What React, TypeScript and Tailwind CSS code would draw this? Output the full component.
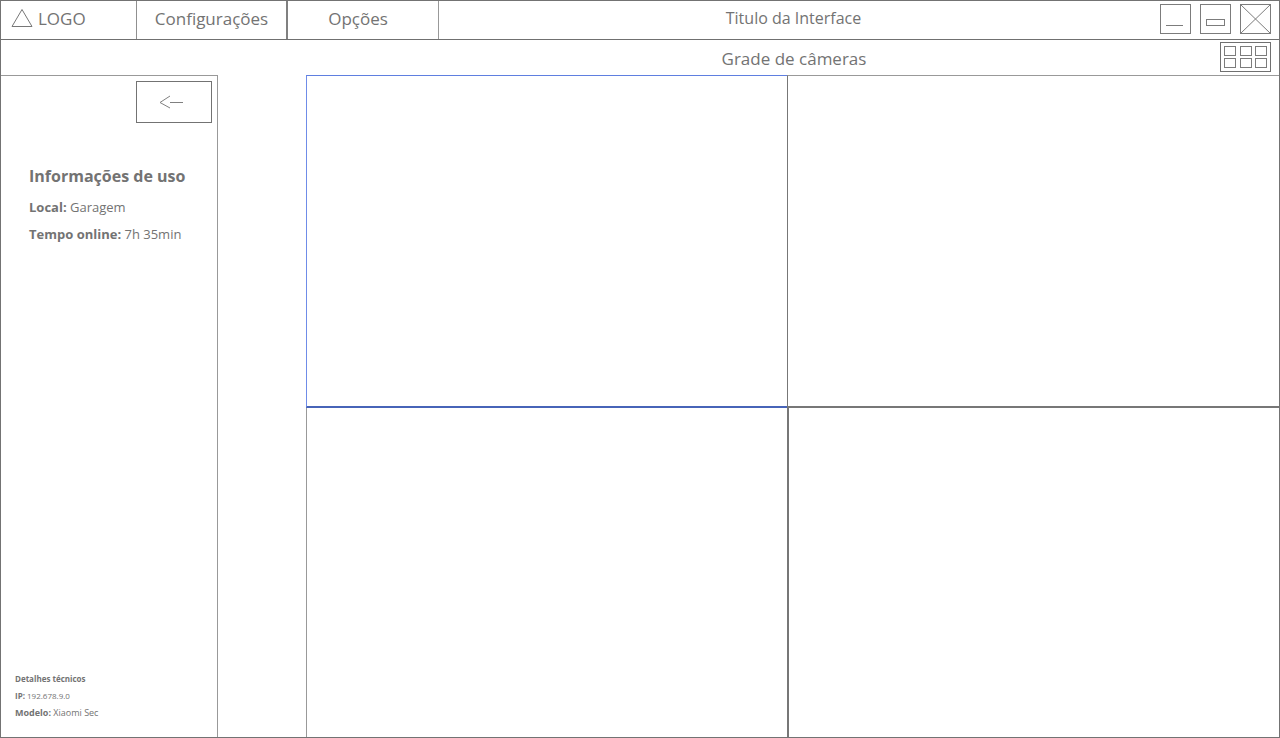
import type { ReactNode } from "react";

const cameras = ["Câmera 1", "Câmera 2", "Câmera 3", "Câmera 4"];

const cameraBorders = [
  "border-t border-l border-b-2 border-t-[#5f7fe0] border-l-[#6f8ce8] border-b-[#4764b8]",
  "border-t border-l border-b-2 border-t-[#999999] border-l-[#777777] border-b-[#777777]",
  "border-l border-l-[#999999]",
  "border-l-2 border-l-[#777777]",
];

function WindowButton({ label, children }: { label: string; children: ReactNode }) {
  return (
    <button type="button" aria-label={label} className="block">
      <svg width="31" height="30" viewBox="0 0 31 30" fill="none" stroke="#7c7c7c">
        <rect x="0.5" y="0.5" width="30" height="29" />
        {children}
      </svg>
    </button>
  );
}

function Header() {
  return (
    <header className="flex h-[39px] border-b border-[#707070]">
      <a href="#" className="flex w-[136px] items-center gap-[5px] border-r border-[#909090] pb-1 pl-[10px]">
        <svg width="22" height="20" viewBox="0 0 22 20" fill="none" stroke="#777777">
          <path d="M11 1.5 L21 18.5 H1 Z" />
        </svg>
        <span className="pt-0.5 text-[17px]">LOGO</span>
      </a>
      <nav className="flex text-[17px]">
        <button type="button" className="w-[151px] border-r-2 border-[#808080] pb-0.5">
          Configurações
        </button>
        <button type="button" className="w-[151px] border-r border-[#999999] pr-2.5 pb-0.5">
          Opções
        </button>
      </nav>
      <h1 className="flex flex-1 items-center justify-center pb-1 text-[16px]">Titulo da Interface</h1>
      <div className="flex items-start gap-[9px] pt-[3px] pr-2 pl-3">
        <WindowButton label="Minimizar">
          <path d="M6 21.5 H23" />
        </WindowButton>
        <WindowButton label="Restaurar">
          <rect x="6.5" y="15.5" width="18" height="6" />
        </WindowButton>
        <WindowButton label="Fechar">
          <path d="M0.5 0.5 L30.5 29.5 M30.5 0.5 L0.5 29.5" />
        </WindowButton>
      </div>
    </header>
  );
}

function Sidebar() {
  return (
    <aside className="flex w-[217px] flex-col border-t border-r border-[#999999]">
      <button
        type="button"
        aria-label="Voltar"
        className="mt-[5px] mr-[5px] flex h-[42px] w-[76px] items-center justify-center self-end border border-[#737373] pr-1.5"
      >
        <svg width="24" height="14" viewBox="0 0 24 14" fill="none" stroke="#808080">
          <path d="M11 1 L1 7.5 L11 13 M11 7.5 H24" />
        </svg>
      </button>
      <section className="mt-10 pl-7 text-[13px] leading-[27px]">
        <h2 className="text-[16px] font-bold">Informações de uso</h2>
        <p className="mt-1">
          <strong>Local:</strong> Garagem
        </p>
        <p>
          <strong>Tempo online:</strong> 7h 35min
        </p>
      </section>
      <section className="mt-auto mb-4 pl-[14px] text-[8px] leading-[17px]">
        <h2 className="font-bold">Detalhes técnicos</h2>
        <p>
          <strong>IP:</strong> 192.678.9.0
        </p>
        <p className="text-[9px]">
          <strong>Modelo:</strong> Xiaomi Sec
        </p>
      </section>
    </aside>
  );
}

function CameraGrid() {
  return (
    <main className="grid flex-1 grid-cols-[481fr_492fr] grid-rows-[333fr_329fr]">
      {cameras.map((camera, i) => (
        <section key={camera} aria-label={camera} className={cameraBorders[i]} />
      ))}
    </main>
  );
}

export default function App() {
  return (
    <div className="flex min-h-screen flex-col border border-[#737373] bg-white font-['Open_Sans','Noto_Sans',sans-serif] text-[#737373]">
      <Header />
      <div className="flex h-[35px] pr-2 pl-[305px]">
        <h2 className="flex flex-1 items-center justify-center pt-0.5 pl-[62px] text-[17px]">Grade de câmeras</h2>
        <button type="button" aria-label="Alterar grade" className="mt-[2px] self-start">
          <svg width="51" height="30" viewBox="0 0 51 30" fill="none" stroke="#7c7c7c">
            <rect x="0.5" y="0.5" width="50" height="29" stroke="#707070" />
            {[4, 20, 35].map((x) =>
              [4, 16].map((y) => (
                <rect key={`${x}-${y}`} x={x + 0.5} y={y + 0.5} width="11" height="9" />
              )),
            )}
          </svg>
        </button>
      </div>
      <div className="flex flex-1 gap-[88px]">
        <Sidebar />
        <CameraGrid />
      </div>
    </div>
  );
}
